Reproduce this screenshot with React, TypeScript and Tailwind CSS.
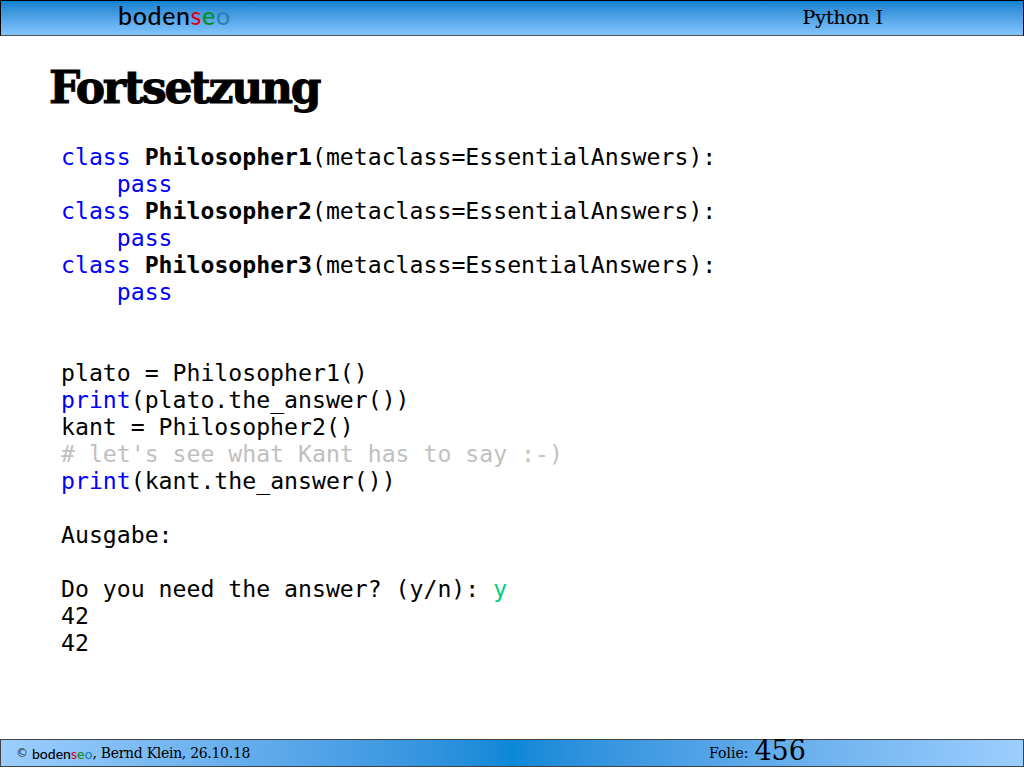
import React from 'react';

function Kw({ children }: { children: React.ReactNode }) {
  return <span className="text-[#0000ff]">{children}</span>;
}

function ClassBlock({ name }: { name: string }) {
  return (
    <>
      <div><Kw>class</Kw> <b>{name}</b>(metaclass=EssentialAnswers):</div>
      <div>    <Kw>pass</Kw></div>
    </>
  );
}

function Logo({ className }: { className: string }) {
  return (
    <span className={className}>
      boden<span className="text-[#e0001a]">s</span><span className="text-[#0a9020]">e</span><span className="text-[#2a7fb8]">o</span>
    </span>
  );
}

export default function App() {
  return (
    <div className="w-[1024px] h-[768px] bg-white flex flex-col overflow-hidden">
      <div className="h-[36px] shrink-0 flex items-center border border-black border-b-[#555] bg-gradient-to-b from-[#0a82cf] to-[#82c5fd]">
        <Logo className="ml-[117px] font-['Lato','Noto_Sans',sans-serif] text-[25px] font-medium leading-none tracking-[0.6px] text-black -mt-[5px]" />
        <span className="ml-auto mr-[140px] font-['DejaVu_Serif',serif] text-[19px] text-black -mt-[1px] [-webkit-text-stroke:0.2px_black]">Python I</span>
      </div>

      <h1 className="ml-[49px] mt-[23px] h-[58px] font-['DejaVu_Serif',serif] font-bold text-[44px] leading-[58px] tracking-[-2.2px] text-black [-webkit-text-stroke:1px_black]">
        Fortsetzung
      </h1>

      <div className="ml-[61px] mt-[27.4px] flex-1 whitespace-pre font-['DejaVu_Sans_Mono',monospace] text-[23.17px] leading-[26.95px] text-black">
        <ClassBlock name="Philosopher1" />
        <ClassBlock name="Philosopher2" />
        <ClassBlock name="Philosopher3" />
        <div> </div>
        <div> </div>
        <div>plato = Philosopher1()</div>
        <div><Kw>print</Kw>(plato.the_answer())</div>
        <div>kant = Philosopher2()</div>
        <div className="text-[#c0c0c0]"># let's see what Kant has to say :-)</div>
        <div><Kw>print</Kw>(kant.the_answer())</div>
        <div> </div>
        <div>Ausgabe:</div>
        <div> </div>
        <div>Do you need the answer? (y/n): <span className="text-[#00cc80]">y</span></div>
        <div>42</div>
        <div>42</div>
      </div>

      <div className="h-[28px] mb-[1px] shrink-0 flex items-center border border-[#444] bg-gradient-to-r from-[#9ccefd] via-[#0a88d8] to-[#9ccefd] text-black">
        <span className="ml-[15px] font-['DejaVu_Sans',sans-serif] text-[12px] text-[#222]">©</span>
        <Logo className="ml-[4px] font-['Lato','Noto_Sans',sans-serif] text-[14px] font-medium" />
        <span className="font-['DejaVu_Serif',serif] text-[14px] tracking-[-0.3px]">, Bernd Klein, 26.10.18</span>
        <span className="ml-[459px] font-['DejaVu_Serif',serif] text-[14px]">Folie:</span>
        <span className="ml-[6px] -mt-[5px] font-['DejaVu_Serif',serif] text-[27px] leading-none">456</span>
      </div>
    </div>
  );
}
